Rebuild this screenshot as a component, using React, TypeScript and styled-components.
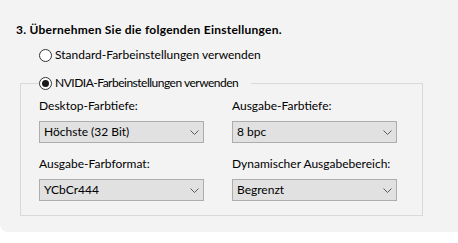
import styled, { createGlobalStyle } from "styled-components";

const GlobalStyle = createGlobalStyle`
    html, body {
        margin: 0;
        padding: 0;
        background: #ffffff;
    }
    body {
        font-family: Lato, "Noto Sans", sans-serif;
        font-size: 12px;
        color: #000000;
    }
`;

const Panel = styled.div`
    width: 458px;
    height: 232px;
    box-sizing: border-box;
    background: #f3f3f3;
    border-bottom-left-radius: 8px;
    padding: 22px 0 0 16px;
`;

const Heading = styled.div`
    font-weight: bold;
    line-height: 16px;
    letter-spacing: 0.25px;
    margin-bottom: 9px;
`;

const RadioRow = styled.label`
    display: flex;
    align-items: center;
    gap: 3px;
    line-height: 16px;
    padding-left: ${(p: { $indent?: number }) => p.$indent ?? 0}px;
`;

const RadioDot = styled.span<{ $checked?: boolean }>`
    width: 13px;
    height: 13px;
    box-sizing: border-box;
    border: 1px solid #333333;
    border-radius: 50%;
    background: #ffffff;
    display: flex;
    align-items: center;
    justify-content: center;

    &::after {
        content: "";
        width: 7px;
        height: 7px;
        border-radius: 50%;
        background: #1a1a1a;
        display: ${(p) => (p.$checked ? "block" : "none")};
    }
`;

const Group = styled.fieldset`
    margin: 12px 0 0 4px;
    width: 403px;
    box-sizing: border-box;
    border: 1px solid #d9d9d9;
    padding: 7px 0 14px 18px;
`;

const Legend = styled.legend`
    padding: 0 13px 0 0;
    margin-left: 0;
`;

const NarrowText = styled.span`
    letter-spacing: -0.5px;
`;

const Grid = styled.div`
    display: grid;
    grid-template-columns: 165px 165px;
    column-gap: 28px;
`;

const Field = styled.div`
    display: flex;
    flex-direction: column;
    gap: 7px;
    margin-bottom: ${(p: { $last?: boolean }) => (p.$last ? 0 : 13)}px;
`;

const Label = styled.div`
    line-height: 16px;
    white-space: nowrap;
`;

const Select = styled.div`
    height: 22px;
    box-sizing: border-box;
    border: 1px solid #adadad;
    background: #e1e1e1;
    display: flex;
    align-items: center;
    justify-content: space-between;
    padding: 0 4px 0 4px;
    line-height: 16px;
`;

const Chevron = () => (
    <svg width="9" height="5" viewBox="0 0 9 5">
        <polyline points="0.5,0.5 4.5,4.5 8.5,0.5" fill="none" stroke="#5a5a5a" strokeWidth="1" />
    </svg>
);

const fields = [
    { label: "Desktop-Farbtiefe:", value: "Höchste (32 Bit)" },
    { label: "Ausgabe-Farbtiefe:", value: "8 bpc" },
    { label: "Ausgabe-Farbformat:", value: "YCbCr444" },
    { label: "Dynamischer Ausgabebereich:", value: "Begrenzt" },
];

export default function App() {
    return (
        <>
            <GlobalStyle />
            <Panel>
                <Heading>3. Übernehmen Sie die folgenden Einstellungen.</Heading>
                <RadioRow $indent={23}>
                    <RadioDot />
                    Standard-Farbeinstellungen verwenden
                </RadioRow>
                <Group>
                    <Legend>
                        <RadioRow>
                            <RadioDot $checked />
                            <NarrowText>NVIDIA-Farbeinstellungen verwenden</NarrowText>
                        </RadioRow>
                    </Legend>
                    <Grid>
                        {fields.map((f, i) => (
                            <Field key={f.label} $last={i >= 2}>
                                <Label>{f.label}</Label>
                                <Select>
                                    {f.value}
                                    <Chevron />
                                </Select>
                            </Field>
                        ))}
                    </Grid>
                </Group>
            </Panel>
        </>
    );
}
